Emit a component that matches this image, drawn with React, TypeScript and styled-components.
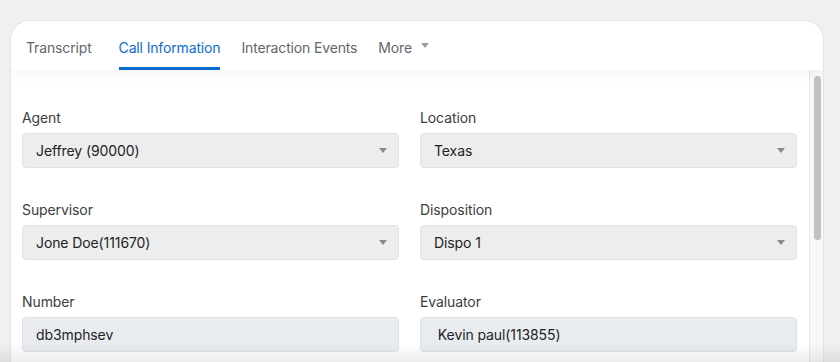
import styled, { createGlobalStyle } from "styled-components";

const GlobalStyle = createGlobalStyle`
  * { box-sizing: border-box; }
  html, body {
    margin: 0;
    padding: 0;
    background: #eef0f2;
    font-family: Inter, "Noto Sans", "Liberation Sans", sans-serif;
  }
`;

const tabs = ["Transcript", "Call Information", "Interaction Events"];

type Field = {
  label: string;
  value: string;
  kind: "select" | "input";
};

const fields: Field[] = [
  { label: "Agent", value: "Jeffrey (90000)", kind: "select" },
  { label: "Location", value: "Texas", kind: "select" },
  { label: "Supervisor", value: "Jone Doe(111670)", kind: "select" },
  { label: "Disposition", value: "Dispo 1", kind: "select" },
  { label: "Number", value: "db3mphsev", kind: "input" },
  { label: "Evaluator", value: " Kevin paul(113855)", kind: "input" },
];

const Caret = ({ color = "#8a8a8a" }: { color?: string }) => (
  <svg width="8" height="5" viewBox="0 0 8 5" aria-hidden>
    <path d="M0 0 L8 0 L4 5 Z" fill={color} />
  </svg>
);

export default function App() {
  return (
    <>
      <GlobalStyle />
      <Page>
        <Card>
          <TabBar>
            {tabs.map((t) => (
              <Tab key={t} $active={t === "Call Information"}>
                {t}
              </Tab>
            ))}
            <Tab $active={false}>
              More
              <MoreCaret>
                <Caret color="#9a9ca3" />
              </MoreCaret>
            </Tab>
          </TabBar>

          <Content>
            <FormGrid>
              {fields.map((f) => (
                <FieldBox key={f.label}>
                  <Label>{f.label}</Label>
                  {f.kind === "select" ? (
                    <SelectBox>
                      <span>{f.value}</span>
                      <Caret />
                    </SelectBox>
                  ) : (
                    <TextInput readOnly value={f.value} />
                  )}
                </FieldBox>
              ))}
            </FormGrid>

            {/* scrollbar */}
            <ScrollTrack>
              <ScrollThumb />
            </ScrollTrack>
          </Content>
        </Card>
        <BottomFade />
      </Page>
    </>
  );
}

const Page = styled.div`
  height: 362px;
  overflow: hidden;
  padding: 20px 16px 0 10px;
`;

const Card = styled.div`
  height: 360px;
  background: #fff;
  border: 1px solid #e0e3e7;
  border-bottom: none;
  border-radius: 20px 20px 0 0;
  display: flex;
  flex-direction: column;
  overflow: hidden;
`;

const TabBar = styled.div`
  position: relative;
  z-index: 1;
  height: 49px;
  flex-shrink: 0;
  display: flex;
  align-items: stretch;
  gap: 21px;
  padding-left: 15px;
  background: #fff;
  box-shadow: 0 3px 12px rgba(0, 0, 0, 0.05);
`;

const Tab = styled.div<{ $active: boolean }>`
  display: flex;
  align-items: center;
  padding-top: 6px;
  font-size: 14px;
  letter-spacing: -0.15px;
  color: ${({ $active }) => ($active ? "#0b6cd0" : "#62666e")};
  border-bottom: 3px solid
    ${({ $active }) => ($active ? "#0b6cd0" : "transparent")};

  &:first-child {
    margin-right: 6px;
  }
`;

const MoreCaret = styled.span`
  display: inline-flex;
  margin-left: 9px;
  margin-top: -3px;
`;

const Content = styled.div`
  flex: 1;
  display: flex;
  align-items: stretch;
  overflow: hidden;
`;

const FormGrid = styled.div`
  flex: 1;
  display: grid;
  grid-template-columns: 1fr 1fr;
  grid-auto-rows: min-content;
  column-gap: 21px;
  row-gap: 32px;
  padding: 38px 12px 0 11px;
`;

const ScrollTrack = styled.div`
  width: 14px;
  flex-shrink: 0;
  padding: 6px 2px 0 4px;
  background: #f8f8f8;
  border-left: 1px solid #e9e9e9;
`;

const ScrollThumb = styled.div`
  height: 164px;
  border-radius: 5px;
  background: #c1c1c1;
`;

const FieldBox = styled.div`
  display: flex;
  flex-direction: column;
  gap: 5px;
`;

const Label = styled.label`
  font-size: 14px;
  line-height: 20px;
  letter-spacing: -0.1px;
  color: #3b3d40;
`;

const SelectBox = styled.div`
  height: 35px;
  display: flex;
  align-items: center;
  justify-content: space-between;
  padding: 0 11px 0 13px;
  background: #ededed;
  border: 1px solid #dfe2e6;
  border-radius: 4px;
  font-size: 14px;
  letter-spacing: -0.1px;
  color: #212326;
`;

const TextInput = styled.input`
  height: 35px;
  width: 100%;
  padding: 0 13px;
  background: #e9ecef;
  border: 1px solid #dde1e5;
  border-radius: 4px;
  font-family: inherit;
  font-size: 14px;
  letter-spacing: -0.1px;
  color: #212326;
  outline: none;
`;

const BottomFade = styled.div`
  position: fixed;
  left: 0;
  right: 0;
  bottom: 0;
  height: 18px;
  pointer-events: none;
  background: linear-gradient(to bottom, rgba(0, 0, 0, 0), rgba(0, 0, 0, 0.07));
`;
